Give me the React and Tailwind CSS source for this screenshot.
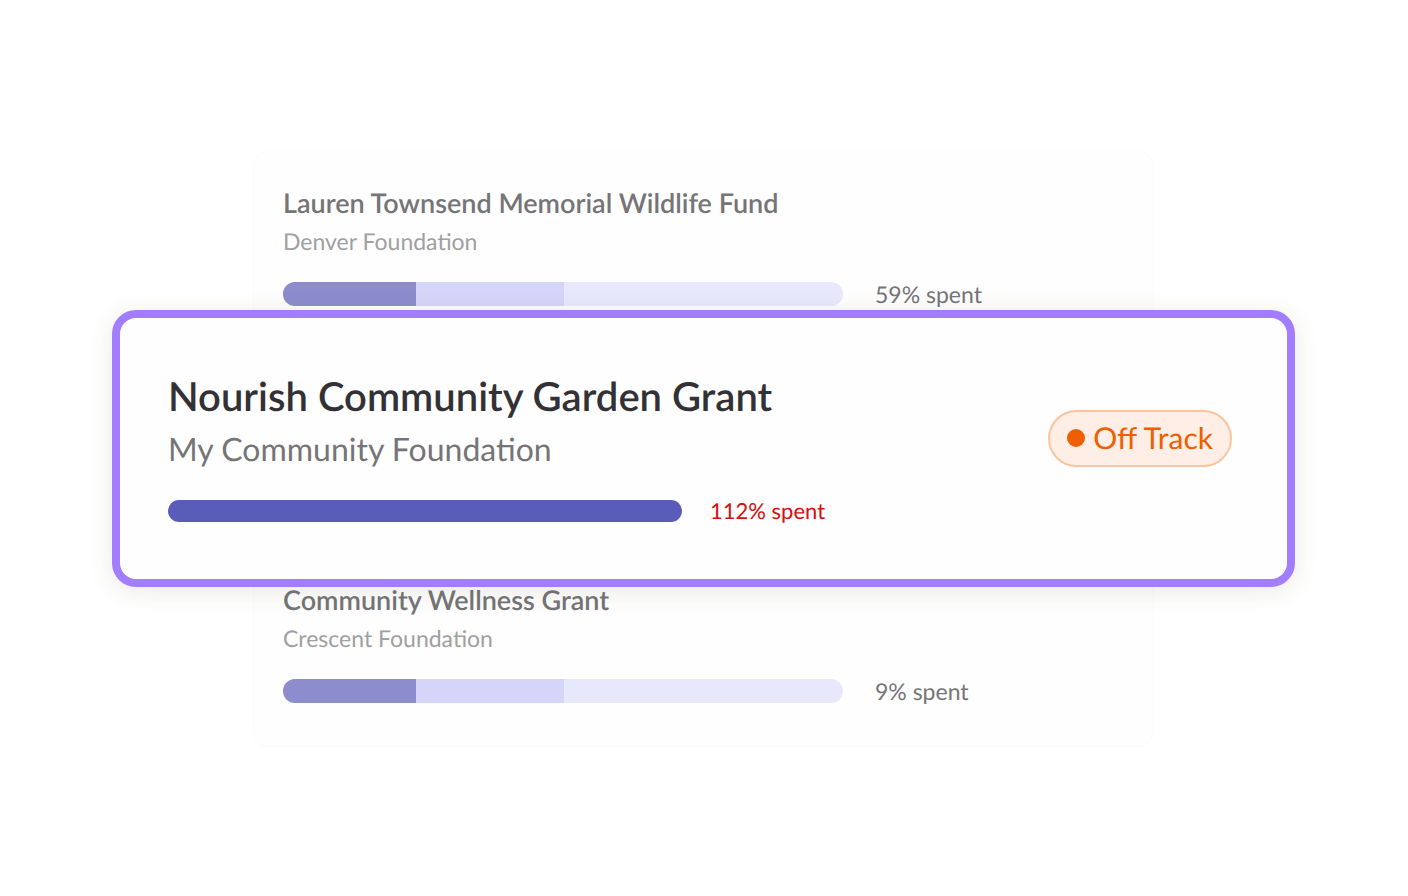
const grants = [
  { title: 'Lauren Townsend Memorial Wildlife Fund', funder: 'Denver Foundation', spent: 59 },
  { title: 'Community Wellness Grant', funder: 'Crescent Foundation', spent: 9 },
];

function GrantRow({ title, funder, spent }) {
  return (
    <article>
      <h2 className="text-[27px] leading-9 font-semibold text-[#757477]">{title}</h2>
      <p className="mt-1 text-[23px] leading-8 text-[#a09fa1]">{funder}</p>
      <div className="mt-[21px] flex items-center gap-8">
        <div
          role="progressbar"
          aria-label={title}
          aria-valuenow={spent}
          aria-valuemin={0}
          aria-valuemax={100}
          className="flex h-6 w-full max-w-[560px] overflow-hidden rounded-full bg-[#e8e8fc]"
        >
          <div className="w-[133px] bg-[#8d8dce]" />
          <div className="w-[148px] bg-[#d4d5f8]" />
        </div>
        <span className="text-[23px] leading-8 whitespace-nowrap text-[#757477]">{spent}% spent</span>
      </div>
    </article>
  );
}

export default function App() {
  return (
    <main className="grid min-h-screen items-center justify-items-center bg-white pr-[113px] pl-28 font-['Lato','Noto_Sans',sans-serif] [text-rendering:geometricPrecision]">
      <section className="col-start-1 row-start-1 flex w-full max-w-[901px] flex-col gap-[272px] rounded-2xl border border-[#fbfbfb] bg-[#fefefe] px-[29px] pt-[34px] pb-[39px]">
        {grants.map((grant) => (
          <GrantRow key={grant.title} {...grant} />
        ))}
      </section>

      <article className="z-10 col-start-1 row-start-1 flex w-full items-start justify-between rounded-3xl border-8 border-[#a27dff] bg-[#fefefe] pt-[54px] pr-[55px] pb-[54px] pl-12 shadow-[0_4px_24px_rgba(80,70,30,0.12)]">
        <div className="grow">
          <h1 className="text-[40px] leading-[48px] font-semibold text-[#323135]">Nourish Community Garden Grant</h1>
          <p className="mt-[7px] text-[32px] leading-[44px] text-[#757477]">My Community Foundation</p>
          <div className="mt-[26px] flex items-center gap-7">
            <div
              role="progressbar"
              aria-label="Nourish Community Garden Grant"
              aria-valuenow={112}
              aria-valuemin={0}
              aria-valuemax={112}
              className="h-[22px] w-full max-w-[514px] rounded-full bg-[#5b5bb9]"
            />
            <span className="text-[22px] leading-7 whitespace-nowrap text-[#d30f0f]">112% spent</span>
          </div>
        </div>
        <div className="mt-[38px] flex h-[57px] shrink-0 items-center gap-2 rounded-full border-2 border-[#fbc49c] bg-[#ffeee5] px-[17px] text-[30px] leading-10 text-[#ed5f00]">
          <span className="size-[18px] rounded-full bg-[#ed5f00]" />
          <span>Off Track</span>
        </div>
      </article>
    </main>
  );
}
